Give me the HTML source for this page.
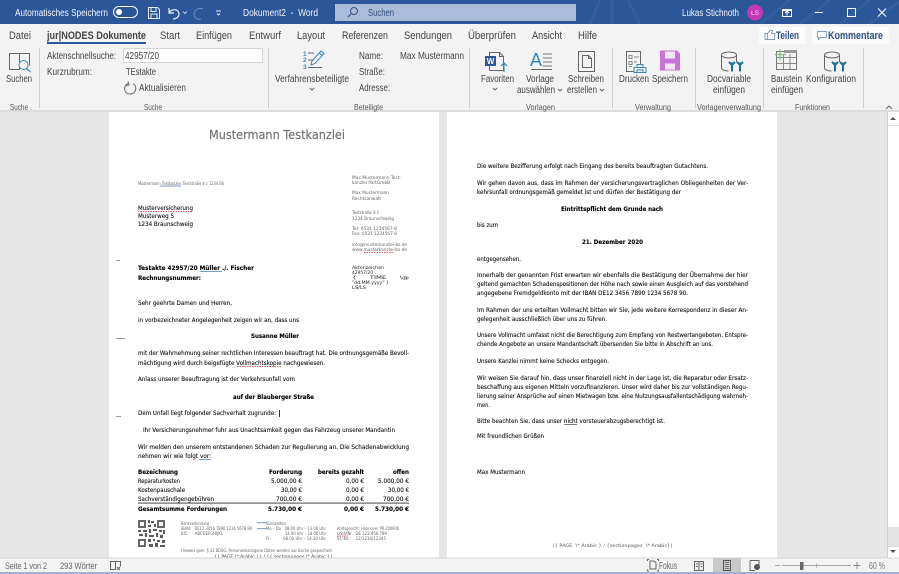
<!DOCTYPE html>
<html lang="de"><head><meta charset="utf-8"><title>Dokument2 - Word</title>
<style>
html,body{margin:0;padding:0;background:#e6e6e6;width:899px;height:574px;overflow:hidden}
svg{display:block;position:absolute;left:0;top:0;filter:blur(.35px)}
text{white-space:pre}
.u{font-family:"Liberation Sans",sans-serif;font-size:10px;fill:#444}
.g{font-family:"Liberation Sans",sans-serif;font-size:8.5px;fill:#555}
.t{font-family:"Liberation Sans",sans-serif;font-size:11px;fill:#444}
.w{font-family:"Liberation Sans",sans-serif;font-size:10px;fill:#f0f4fa}
.d{font-family:"DejaVu Sans",sans-serif;font-size:6.3px;fill:#111;stroke:#111;stroke-width:.12px}
.b{font-family:"DejaVu Sans",sans-serif;font-size:6.3px;font-weight:bold;fill:#000;stroke:#000;stroke-width:.1px}
.s{font-family:"DejaVu Sans",sans-serif;font-size:4.4px;fill:#666}
.i{fill:none;stroke:#666;stroke-width:1}
.sep{stroke:#cfcfcf;stroke-width:1}
</style></head><body>
<svg width="899" height="574" viewBox="0 0 899 574" xmlns="http://www.w3.org/2000/svg">
<!-- backgrounds -->
<rect width="899" height="574" fill="#e6e6e6"/>
<rect x="109" y="112" width="330" height="446" fill="#fff"/>
<rect x="447" y="112" width="330" height="446" fill="#fff"/>
<!-- title bar -->
<rect width="899" height="24" fill="#2b579a"/>
<g stroke="#3a66a8" stroke-width="3" fill="none" opacity=".55">
<path d="M590 24L600 0M612 24L612 0M640 24L628 0M760 24L790 0M800 24L830 0M840 24L870 0M870 24L899 2"/>
</g>
<text class="w" x="15" y="16" textLength="93" lengthAdjust="spacingAndGlyphs">Automatisches Speichern</text>
<rect x="113.500" y="6.500" width="24" height="11" rx="5.500" fill="none" stroke="#fff"/>
<circle cx="119" cy="12" r="3" fill="#fff"/>
<g fill="none" stroke="#e8eef7" stroke-width="1">
<path d="M148.500 7.500h9l2 2v9h-11zM151 7.500v4h5v-4M151 18.500v-4.500h6v4.500"/>
<path d="M169 8v5h5M169 13c3-5 10-4 10 1 0 3-3 5-6 5" stroke-width="1.200"/>
<path d="M183 11.500l2 2 2-2" stroke-width=".8"/>
<path d="M203 9c-4-2-9 1-9 5s4 6 7 5" opacity=".35"/>
<path d="M216 11h5M217 13.500l1.500 1.500 1.500-1.500" stroke-width=".9"/>
</g>
<text class="w" x="243" y="16" textLength="75" lengthAdjust="spacingAndGlyphs">Dokument2  -  Word</text>
<rect x="335" y="4" width="241" height="17" fill="#a9bcd9"/>
<g fill="none" stroke="#33527f" stroke-width="1"><circle cx="354" cy="11" r="3.500"/><path d="M351.500 13.500l-3.500 3.500"/></g>
<text class="u" x="368" y="16" textLength="26" lengthAdjust="spacingAndGlyphs" style="fill:#2f4d7a">Suchen</text>
<text class="w" x="682" y="16" textLength="57" lengthAdjust="spacingAndGlyphs">Lukas Stichnoth</text>
<circle cx="755" cy="12.500" r="8" fill="#c239b3"/>
<text x="755" y="15" text-anchor="middle" font-family="Liberation Sans,sans-serif" font-size="6.500" fill="#f6d8f2">LS</text>
<g fill="none" stroke="#fff" stroke-width="1">
<rect x="782.500" y="9.500" width="9" height="7"/><path d="M787 15.500v-4M785 13l2-2 2 2M782.500 10.500h9"/>
<path d="M815 12.500h8"/>
<rect x="847.500" y="8.500" width="8" height="8"/>
<path d="M878 8.500l8 8M886 8.500l-8 8"/>
</g>
<!-- ribbon -->
<rect y="24" width="899" height="87" fill="#f3f3f3"/>
<rect y="110" width="899" height="2" fill="#dcdcdc"/>
<text class="t" x="9" y="39" textLength="22" lengthAdjust="spacingAndGlyphs">Datei</text>
<text class="t" x="47" y="39" textLength="99" lengthAdjust="spacingAndGlyphs" style="font-weight:bold;fill:#444">jur|NODES Dokumente</text>
<text class="t" x="160" y="39" textLength="20" lengthAdjust="spacingAndGlyphs">Start</text>
<text class="t" x="196" y="39" textLength="36" lengthAdjust="spacingAndGlyphs">Einfügen</text>
<text class="t" x="249" y="39" textLength="32" lengthAdjust="spacingAndGlyphs">Entwurf</text>
<text class="t" x="297" y="39" textLength="28" lengthAdjust="spacingAndGlyphs">Layout</text>
<text class="t" x="342" y="39" textLength="46" lengthAdjust="spacingAndGlyphs">Referenzen</text>
<text class="t" x="404" y="39" textLength="48" lengthAdjust="spacingAndGlyphs">Sendungen</text>
<text class="t" x="468" y="39" textLength="48" lengthAdjust="spacingAndGlyphs">Überprüfen</text>
<text class="t" x="532" y="39" textLength="30" lengthAdjust="spacingAndGlyphs">Ansicht</text>
<text class="t" x="578" y="39" textLength="19" lengthAdjust="spacingAndGlyphs">Hilfe</text>
<rect x="47" y="42" width="99" height="2" fill="#2b579a"/>
<rect x="759" y="27" width="46" height="17" fill="#fbfbfb"/>
<rect x="812" y="27" width="77" height="17" fill="#fbfbfb"/>
<path d="M765 39.500v-6h2.500l3-3.500 2 .5-1 3h3.500l-.5 6zM767.500 33.500v6" fill="none" stroke="#5a7fb5" stroke-width=".7"/>
<text class="u" x="776" y="39" textLength="23" lengthAdjust="spacingAndGlyphs" style="font-weight:bold;fill:#2b4f88;font-size:11px">Teilen</text>
<path d="M817.500 31.500h9v6h-6l-2 2v-2h-1z" fill="none" stroke="#5a7fb5" stroke-width=".7"/>
<text class="u" x="828" y="39" textLength="55" lengthAdjust="spacingAndGlyphs" style="font-weight:bold;fill:#2b4f88;font-size:11px">Kommentare</text>
<!-- separators -->
<g class="sep">
<path d="M39.500 48v60M268.500 48v60M469.500 48v60M612.500 48v60M695.500 48v60M763.500 48v60M863.500 48v60"/>
</g>
<!-- Suche -->
<path class="i" d="M9.500 53.500h10v16h-10zM19.500 53.500h10v12"/>
<circle cx="23.500" cy="65" r="4.500" fill="#f3f3f3" stroke="#3d87b8" stroke-width="1"/>
<path d="M26.500 68.500l4 3.500" stroke="#3d87b8" stroke-width="1.200"/>
<text class="u" x="6" y="82" textLength="26" lengthAdjust="spacingAndGlyphs">Suchen</text>
<text class="g" x="10" y="110" textLength="18" lengthAdjust="spacingAndGlyphs">Suche</text>
<text class="u" x="47" y="59" textLength="69" lengthAdjust="spacingAndGlyphs">Aktenschnellsuche:</text>
<rect x="123.500" y="48.500" width="139" height="14" fill="#fff" stroke="#d4d4d4"/>
<text class="u" x="125" y="59" textLength="34" lengthAdjust="spacingAndGlyphs">42957/20</text>
<text class="u" x="47" y="75" textLength="45" lengthAdjust="spacingAndGlyphs">Kurzrubrum:</text>
<text class="u" x="126" y="75" textLength="30" lengthAdjust="spacingAndGlyphs">TEstakte</text>
<path class="i" d="M128 83.500c-5 2-4.500 10 1.500 10.500 7 .5 8-8 3.500-10.500M128 81.500l1 3.500-3 .5"/>
<text class="u" x="139" y="91" textLength="47" lengthAdjust="spacingAndGlyphs">Aktualisieren</text>
<text class="g" x="144" y="110" textLength="18" lengthAdjust="spacingAndGlyphs">Suche</text>
<!-- Beteiligte -->
<g font-family="Liberation Sans,sans-serif" font-size="6.500" fill="#3d87b8" font-weight="bold">
<text x="303" y="56">1</text><text x="303" y="62">2</text><text x="303" y="69">3</text></g>
<path d="M308 53h6M314 60h-6M308 67.500h14" stroke="#666" fill="none"/>
<path d="M311 65l1-4 9-10 3 2.500-9 10zM319.500 53l2.500 2.500" fill="none" stroke="#3d87b8" stroke-width="1"/>
<text class="u" x="275" y="82" textLength="74" lengthAdjust="spacingAndGlyphs">Verfahrensbeteiligte</text>
<path d="M310 88l2 2 2-2" class="i" stroke-width=".8"/>
<text class="u" x="359" y="59" textLength="24" lengthAdjust="spacingAndGlyphs">Name:</text>
<text class="u" x="400" y="59" textLength="64" lengthAdjust="spacingAndGlyphs">Max Mustermann</text>
<text class="u" x="359" y="75" textLength="26" lengthAdjust="spacingAndGlyphs">Straße:</text>
<text class="u" x="359" y="91" textLength="31" lengthAdjust="spacingAndGlyphs">Adresse:</text>
<text class="g" x="354" y="110" textLength="29" lengthAdjust="spacingAndGlyphs">Beteiligte</text>
<!-- Vorlagen -->
<path class="i" d="M489.500 52.500h10l4 4v14h-14z"/><path class="i" d="M499.500 52.500v4h4"/>
<rect x="485" y="56" width="11" height="10" fill="#2b579a"/>
<text x="490.500" y="64" text-anchor="middle" font-family="Liberation Sans,sans-serif" font-size="8" font-weight="bold" fill="#fff">W</text>
<path d="M504 72v-9M501 66l3-3 3 3" fill="none" stroke="#3d87b8" stroke-width="1.200"/>
<text class="u" x="481" y="82" textLength="33" lengthAdjust="spacingAndGlyphs">Favoriten</text>
<path d="M493 88l2 2 2-2" class="i" stroke-width=".8"/>
<text x="530" y="66" font-family="Liberation Sans,sans-serif" font-size="18" fill="#2e86c1">A</text>
<path d="M543 54h9M543 58h9M543 62h9M543 66h9" stroke="#777"/><path d="M531 69.500h21" stroke="#666"/>
<text class="u" x="526" y="82" textLength="28" lengthAdjust="spacingAndGlyphs">Vorlage</text>
<text class="u" x="517" y="93" textLength="38" lengthAdjust="spacingAndGlyphs">auswählen</text>
<path d="M558 89l2 2 2-2" class="i" stroke-width=".8"/>
<rect x="578.500" y="51.500" width="16" height="20" fill="none" stroke="#666"/>
<path class="i" d="M582.500 55.500h6l3 3v9h-9zM588.500 55.500v3h3"/>
<text class="u" x="568" y="82" textLength="36" lengthAdjust="spacingAndGlyphs">Schreiben</text>
<text class="u" x="567" y="93" textLength="30" lengthAdjust="spacingAndGlyphs">erstellen</text>
<path d="M600 89l2 2 2-2" class="i" stroke-width=".8"/>
<text class="g" x="526" y="110" textLength="29" lengthAdjust="spacingAndGlyphs">Vorlagen</text>
<!-- Verwaltung -->
<path class="i" d="M626.500 51.500h14v20h-14z"/>
<path d="M629 55.500h3v3h-3zM629 61.500h3v3h-3zM629 66.500h3M634 57h5M634 62h3" stroke="#888" fill="none"/>
<path d="M634 67.500h12v5h-12zM637 67.500v-3h6v3M637 72v-2h6v2" fill="#f3f3f3" stroke="#3d87b8"/>
<text class="u" x="619" y="82" textLength="30" lengthAdjust="spacingAndGlyphs">Drucken</text>
<path d="M660 50.500h17l3 3v17h-20z" fill="#c873d8"/>
<rect x="665" y="51.500" width="10" height="7" fill="#f3e6f6"/><rect x="665" y="63.500" width="10" height="6" fill="#f3e6f6"/>
<text class="u" x="652" y="82" textLength="36" lengthAdjust="spacingAndGlyphs">Speichern</text>
<text class="g" x="635" y="110" textLength="36" lengthAdjust="spacingAndGlyphs">Verwaltung</text>
<!-- db icons -->
<g><path class="i" d="M721.500 55v13c0 1.500 3 3 7 3M736.500 55v7"/><ellipse cx="729" cy="55" rx="7.500" ry="3" class="i"/>
<path d="M732 62.500v9M740 62.500v9M729 62l3 3 3-3M737 62l3 3 3-3" fill="none" stroke="#1f6e96" stroke-width="2"/></g>
<text class="u" x="707" y="82" textLength="44" lengthAdjust="spacingAndGlyphs">Docvariable</text>
<text class="u" x="713" y="93" textLength="32" lengthAdjust="spacingAndGlyphs">einfügen</text>
<text class="g" x="697" y="110" textLength="64" lengthAdjust="spacingAndGlyphs">Vorlagenverwaltung</text>
<g><rect x="776.500" y="51.500" width="20" height="18" fill="none" stroke="#777"/>
<rect x="784" y="50" width="13" height="3" fill="#999"/>
<path d="M776.500 57.500h20M776.500 63.500h20M783.500 54v15M790 54v15" stroke="#888" fill="none"/>
<path d="M780 49v11M775 54.500h11" stroke="#7cc07c" stroke-width="1.200"/></g>
<text class="u" x="771" y="82" textLength="31" lengthAdjust="spacingAndGlyphs">Baustein</text>
<text class="u" x="771" y="93" textLength="32" lengthAdjust="spacingAndGlyphs">einfügen</text>
<g transform="translate(103,0)"><path class="i" d="M721.500 55v13c0 1.500 3 3 7 3M736.500 55v7"/><ellipse cx="729" cy="55" rx="7.500" ry="3" class="i"/>
<path d="M732 62.500v9M740 62.500v9M729 62l3 3 3-3M737 62l3 3 3-3" fill="none" stroke="#1f6e96" stroke-width="2"/></g>
<text class="u" x="806" y="82" textLength="50" lengthAdjust="spacingAndGlyphs">Konfiguration</text>
<text class="g" x="795" y="110" textLength="35" lengthAdjust="spacingAndGlyphs">Funktionen</text>
<path d="M886 109l3-3 3 3" class="i"/>
<!-- page 1 -->
<text x="209" y="139" textLength="136" lengthAdjust="spacingAndGlyphs" font-family="DejaVu Sans,sans-serif" font-size="12.500" fill="#707070" stroke="#707070" stroke-width=".15">Mustermann Testkanzlei</text>
<text class="s" x="138" y="185" textLength="86" lengthAdjust="spacingAndGlyphs">Mustermann Testkanzlei Teststraße 8 c 1234 BS</text>
<rect x="160" y="185.500" width="21" height="1" fill="#7a9ac4"/>
<text class="s" x="352" y="179" textLength="49" lengthAdjust="spacingAndGlyphs">Max Mustermann Test-</text>
<text class="s" x="352" y="184" textLength="38" lengthAdjust="spacingAndGlyphs">kanzlei PartGmbB</text>
<text class="s" x="352" y="194" textLength="37" lengthAdjust="spacingAndGlyphs">Max Mustermann</text>
<text class="s" x="352" y="200" textLength="29" lengthAdjust="spacingAndGlyphs">Rechtsanwalt</text>
<text class="s" x="352" y="214" textLength="27" lengthAdjust="spacingAndGlyphs">Teststraße 8 c</text>
<text class="s" x="352" y="220" textLength="42" lengthAdjust="spacingAndGlyphs">1234 Braunschweig</text>
<text class="s" x="352" y="230" textLength="45" lengthAdjust="spacingAndGlyphs">Tel: 0531 1234567-8</text>
<text class="s" x="352" y="235" textLength="45" lengthAdjust="spacingAndGlyphs">Fax: 0531 1234567-8</text>
<text class="s" x="352" y="246" textLength="55" lengthAdjust="spacingAndGlyphs">info@musterkanzlei-bs.de</text>
<text class="s" x="352" y="251" textLength="55" lengthAdjust="spacingAndGlyphs">www.musterkanzlei-bs.de</text>
<path d="M364 252.500h30" stroke="#c33" stroke-width=".8" stroke-dasharray="1.500 1"/>
<text class="s" x="352" y="269" textLength="32" lengthAdjust="spacingAndGlyphs" style="fill:#222">Aktenzeichen</text>
<text class="s" x="352" y="274" textLength="21" lengthAdjust="spacingAndGlyphs" style="fill:#222">42957/20</text>
<text class="s" x="352" y="279" textLength="57" lengthAdjust="spacingAndGlyphs" style="fill:#222">{      TIME      \@</text>
<text class="s" x="352" y="284" textLength="37" lengthAdjust="spacingAndGlyphs" style="fill:#222">"dd.MM.yyyy" }</text>
<text class="s" x="352" y="289" textLength="14" lengthAdjust="spacingAndGlyphs" style="fill:#222">LS/LS</text>
<text class="d" x="138" y="210" textLength="55" lengthAdjust="spacingAndGlyphs">Musterversicherung</text>
<path d="M138 211.500h55" stroke="#c33" stroke-width=".8" stroke-dasharray="1.500 1"/>
<text class="d" x="138" y="218" textLength="36" lengthAdjust="spacingAndGlyphs">Musterweg 5</text>
<text class="d" x="138" y="226" textLength="55" lengthAdjust="spacingAndGlyphs">1234 Braunschweig</text>
<path d="M116 260.500h4M116 338.500h9M116 416.500h5" stroke="#999"/>
<text class="b" x="138" y="270" textLength="116" lengthAdjust="spacingAndGlyphs">Testakte 42957/20 Müller ./. Fischer</text>
<path d="M200 271.500h22" stroke="#7a9ac4"/>
<text class="b" x="138" y="280" textLength="63" lengthAdjust="spacingAndGlyphs">Rechnungsnummer:</text>
<text class="d" x="138" y="305" textLength="94" lengthAdjust="spacingAndGlyphs">Sehr geehrte Damen und Herren,</text>
<text class="d" x="138" y="322" textLength="161" lengthAdjust="spacingAndGlyphs">in vorbezeichneter Angelegenheit zeigen wir an, dass uns</text>
<text class="b" x="251" y="338" textLength="48" lengthAdjust="spacingAndGlyphs">Susanne Müller</text>
<text class="d" x="138" y="355" textLength="271" lengthAdjust="spacingAndGlyphs">mit der Wahrnehmung seiner rechtlichen Interessen beauftragt hat. Die ordnungsgemäße Bevoll-</text>
<text class="d" x="138" y="365" textLength="187" lengthAdjust="spacingAndGlyphs">mächtigung wird durch beigefügte Vollmachtskopie nachgewiesen.</text>
<path d="M237 366.500h45" stroke="#c33" stroke-width=".8" stroke-dasharray="1.500 1"/>
<text class="d" x="138" y="381" textLength="157" lengthAdjust="spacingAndGlyphs">Anlass unserer Beauftragung ist der Verkehrsunfall vom</text>
<text class="b" x="233" y="399" textLength="81" lengthAdjust="spacingAndGlyphs">auf der Blauberger Straße</text>
<text class="d" x="138" y="415" textLength="138" lengthAdjust="spacingAndGlyphs">Dem Unfall liegt folgender Sachverhalt zugrunde:</text>
<path d="M279.500 410v7" stroke="#333"/>
<text class="d" x="143" y="432" textLength="252" lengthAdjust="spacingAndGlyphs">Ihr Versicherungsnehmer fuhr aus Unachtsamkeit gegen das Fahrzeug unserer Mandantin</text>
<text class="d" x="138" y="449" textLength="271" lengthAdjust="spacingAndGlyphs">Wir melden den unserem entstandenen Schaden zur Regulierung an. Die Schadenabwicklung</text>
<text class="d" x="138" y="458" textLength="73" lengthAdjust="spacingAndGlyphs">nehmen wir wie folgt vor:</text>
<path d="M199 459.500h12" stroke="#7a9ac4"/>
<text class="b" x="138" y="474" textLength="40" lengthAdjust="spacingAndGlyphs">Bezeichnung</text>
<text class="b" x="269" y="474" textLength="33" lengthAdjust="spacingAndGlyphs">Forderung</text>
<text class="b" x="318" y="474" textLength="46" lengthAdjust="spacingAndGlyphs">bereits gezahlt</text>
<text class="b" x="393" y="474" textLength="16" lengthAdjust="spacingAndGlyphs">offen</text>
<text class="d" x="138" y="483" textLength="42" lengthAdjust="spacingAndGlyphs">Reparaturkosten</text>
<text class="d" x="271" y="483" textLength="31" lengthAdjust="spacingAndGlyphs">5.000,00 €</text><text class="d" x="346" y="483" textLength="18" lengthAdjust="spacingAndGlyphs">0,00 €</text><text class="d" x="378" y="483" textLength="31" lengthAdjust="spacingAndGlyphs">5.000,00 €</text>
<text class="d" x="138" y="492" textLength="47" lengthAdjust="spacingAndGlyphs">Kostenpauschale</text>
<text class="d" x="281" y="492" textLength="21" lengthAdjust="spacingAndGlyphs">30,00 €</text><text class="d" x="346" y="492" textLength="18" lengthAdjust="spacingAndGlyphs">0,00 €</text><text class="d" x="388" y="492" textLength="21" lengthAdjust="spacingAndGlyphs">30,00 €</text>
<text class="d" x="138" y="501" textLength="76" lengthAdjust="spacingAndGlyphs">Sachverständigengebühren</text>
<text class="d" x="276" y="501" textLength="26" lengthAdjust="spacingAndGlyphs">700,00 €</text><text class="d" x="346" y="501" textLength="18" lengthAdjust="spacingAndGlyphs">0,00 €</text><text class="d" x="383" y="501" textLength="26" lengthAdjust="spacingAndGlyphs">700,00 €</text>
<rect x="138" y="502.500" width="271" height="1.200" fill="#666"/>
<text class="b" x="138" y="511" textLength="89" lengthAdjust="spacingAndGlyphs">Gesamtsumme Forderungen</text>
<text class="b" x="268" y="511" textLength="34" lengthAdjust="spacingAndGlyphs">5.730,00 €</text><text class="b" x="344" y="511" textLength="20" lengthAdjust="spacingAndGlyphs">0,00 €</text><text class="b" x="375" y="511" textLength="34" lengthAdjust="spacingAndGlyphs">5.730,00 €</text>
<!-- QR -->
<g opacity=".8">
<path d="M138 520h8v8h-8zM157 520h8v8h-8zM138 539h8v8h-8z" fill="#444"/>
<path d="M140 522h4v4h-4zM159 522h4v4h-4zM140 541h4v4h-4z" fill="#fff"/>
<path d="M148 520h2v3h-2zM151 521h3v2h-3zM154 524h2v3h-2zM148 525h3v2h-3zM138 530h3v2h-3zM143 530h4v2h-4zM149 529h2v4h-2zM153 529h4v2h-4zM159 530h3v2h-3zM163 530h2v4h-2zM139 534h4v2h-4zM145 533h2v4h-2zM149 535h5v2h-5zM156 533h2v4h-2zM160 535h3v3h-3zM148 539h3v3h-3zM153 539h2v2h-2zM157 540h3v2h-3zM162 540h3v3h-3zM149 544h4v3h-4zM155 543h3v4h-3zM160 545h5v2h-5z" fill="#333"/>
</g>
<text class="s" x="181" y="525" textLength="28" lengthAdjust="spacingAndGlyphs">Bankverbindung</text>
<text class="s" x="181" y="530" textLength="71" lengthAdjust="spacingAndGlyphs">IBAN:   DE12 3456 7890 1234 5678 90</text>
<text class="s" x="181" y="535" textLength="42" lengthAdjust="spacingAndGlyphs">BIC:     ABCDEFGHIJKL</text>
<text class="s" x="266" y="525" textLength="20" lengthAdjust="spacingAndGlyphs">Bürozeiten</text>
<text class="s" x="266" y="530" textLength="60" lengthAdjust="spacingAndGlyphs">Mo – Do:  08.00 Uhr – 13.00 Uhr</text>
<text class="s" x="285" y="535" textLength="41" lengthAdjust="spacingAndGlyphs">14.00 Uhr – 18.00 Uhr</text>
<text class="s" x="266" y="540" textLength="60" lengthAdjust="spacingAndGlyphs">Fr:          08.00 Uhr – 14.30 Uhr</text>
<text class="s" x="337" y="530" textLength="62" lengthAdjust="spacingAndGlyphs">Amtsgericht: Hannover PR 200900</text>
<text class="s" x="337" y="535" textLength="50" lengthAdjust="spacingAndGlyphs">UStIdNr.: DE 123 456 789</text>
<text class="s" x="337" y="540" textLength="49" lengthAdjust="spacingAndGlyphs">St.-Nr.:    12/1234/12345</text>
<text class="s" x="181" y="552" textLength="152" lengthAdjust="spacingAndGlyphs">Hinweis gem. § 33 BDSG: Personenbezogene Daten werden zur Sache gespeichert.</text>
<rect x="257" y="522" width="9" height="1.200" fill="#8aa8d0"/><rect x="257" y="528" width="9" height="1.200" fill="#8aa8d0"/>
<path d="M337 536h11" stroke="#c33" stroke-width=".8" stroke-dasharray="1.500 1"/>
<text class="s" x="214" y="558" textLength="119" lengthAdjust="spacingAndGlyphs" style="fill:#444">{{ PAGE \* Arabic }} / {{ sectionpages \* Arabic }}</text>
<!-- page 2 -->
<text class="d" x="477" y="168" textLength="231" lengthAdjust="spacingAndGlyphs">Die weitere Bezifferung erfolgt nach Eingang des bereits beauftragten Gutachtens.</text>
<text class="d" x="477" y="185" textLength="271" lengthAdjust="spacingAndGlyphs">Wir gehen davon aus, dass im Rahmen der versicherungsvertraglichen Obliegenheiten der Ver-</text>
<text class="d" x="477" y="194" textLength="204" lengthAdjust="spacingAndGlyphs">kehrsunfall ordnungsgemäß gemeldet ist und dürfen der Bestätigung der</text>
<text class="b" x="561" y="211" textLength="102" lengthAdjust="spacingAndGlyphs">Eintrittspflicht dem Grunde nach</text>
<text class="d" x="477" y="227" textLength="21" lengthAdjust="spacingAndGlyphs">bis zum</text>
<text class="b" x="582" y="244" textLength="61" lengthAdjust="spacingAndGlyphs">21. Dezember 2020</text>
<text class="d" x="477" y="261" textLength="44" lengthAdjust="spacingAndGlyphs">entgegensehen.</text>
<text class="d" x="477" y="277" textLength="271" lengthAdjust="spacingAndGlyphs">Innerhalb der genannten Frist erwarten wir ebenfalls die Bestätigung der Übernahme der hier</text>
<text class="d" x="477" y="286" textLength="271" lengthAdjust="spacingAndGlyphs">geltend gemachten Schadenspositionen der Höhe nach sowie einen Ausgleich auf das vorstehend</text>
<text class="d" x="477" y="295" textLength="211" lengthAdjust="spacingAndGlyphs">angegebene Fremdgeldkonto mit der IBAN DE12 3456 7890 1234 5678 90.</text>
<text class="d" x="477" y="312" textLength="271" lengthAdjust="spacingAndGlyphs">Im Rahmen der uns erteilten Vollmacht bitten wir Sie, jede weitere Korrespondenz in dieser An-</text>
<text class="d" x="477" y="321" textLength="130" lengthAdjust="spacingAndGlyphs">gelegenheit ausschließlich über uns zu führen.</text>
<text class="d" x="477" y="337" textLength="271" lengthAdjust="spacingAndGlyphs">Unsere Vollmacht umfasst nicht die Berechtigung zum Empfang von Restwertangeboten. Entspre-</text>
<text class="d" x="477" y="346" textLength="236" lengthAdjust="spacingAndGlyphs">chende Angebote an unsere Mandantschaft übersenden Sie bitte in Abschrift an uns.</text>
<text class="d" x="477" y="363" textLength="132" lengthAdjust="spacingAndGlyphs">Unsere Kanzlei nimmt keine Schecks entgegen.</text>
<text class="d" x="477" y="380" textLength="271" lengthAdjust="spacingAndGlyphs">Wir weisen Sie darauf hin, dass unser finanziell nicht in der Lage ist, die Reparatur oder Ersatz-</text>
<text class="d" x="477" y="389" textLength="271" lengthAdjust="spacingAndGlyphs">beschaffung aus eigenen Mitteln vorzufinanzieren. Unser wird daher bis zur vollständigen Regu-</text>
<text class="d" x="477" y="398" textLength="271" lengthAdjust="spacingAndGlyphs">lierung seiner Ansprüche auf einen Mietwagen bzw. eine Nutzungsausfallentschädigung wahrneh-</text>
<text class="d" x="477" y="407" textLength="13" lengthAdjust="spacingAndGlyphs">men.</text>
<text class="d" x="477" y="423" textLength="188" lengthAdjust="spacingAndGlyphs">Bitte beachten Sie, dass unser nicht vorsteuerabzugsberechtigt ist.</text>
<path d="M564 424.500h13" stroke="#444" stroke-width=".7"/>
<text class="d" x="477" y="438" textLength="67" lengthAdjust="spacingAndGlyphs">Mit freundlichen Grüßen</text>
<text class="d" x="477" y="474" textLength="48" lengthAdjust="spacingAndGlyphs">Max Mustermann</text>
<text class="s" x="553" y="547" textLength="119" lengthAdjust="spacingAndGlyphs" style="fill:#555">|{ PAGE  \* Arabic } / {sectionpages  \* Arabic}|</text>
<!-- scrollbar -->
<rect x="887" y="112" width="12" height="446" fill="#fff"/>
<path d="M887.500 112v446" stroke="#cfcfcf"/>
<rect x="888" y="527" width="11" height="19" fill="#e3e3e3"/>
<path d="M890 120l3-3 3 3z" fill="#555"/><path d="M890 550l3 3 3-3z" fill="#555"/>
<path d="M888 125.500h11M888 546.500h11" stroke="#dcdcdc"/>
<!-- status bar -->
<rect y="558" width="899" height="14" fill="#f3f3f3"/>
<path d="M0 558h899" stroke="#d6d6d6"/>
<rect y="572" width="899" height="2" fill="#9fb4cf"/>
<text class="u" x="5" y="569" textLength="42" lengthAdjust="spacingAndGlyphs" style="font-size:9.500px;fill:#666">Seite 1 von 2</text>
<text class="u" x="60" y="569" textLength="37" lengthAdjust="spacingAndGlyphs" style="font-size:9.500px;fill:#666">293 Wörter</text>
<path class="i" d="M110.500 561.500h5v8h-5zM115.500 561.500h5v5M117 567l3 3M120 567l-3 3"/>
<path class="i" d="M650 561h4l2 2v6h-6zM647.500 561v-1.500h1.500M647.500 569.500v1.500h1.500M657 559.500h1.500v1.500M657 571h1.500v-1.500" stroke-width=".8"/>
<text class="u" x="659" y="569" textLength="18" lengthAdjust="spacingAndGlyphs" style="fill:#666">Fokus</text>
<rect x="694.500" y="561.500" width="9" height="9" class="i"/><path d="M699 561.500v9M696 564h2M696 566.500h2M700.500 564h2M700.500 566.500h2" class="i" stroke-width=".7"/>
<rect x="713" y="558" width="28" height="14" fill="#c8c8c8"/>
<rect x="723.500" y="560.500" width="7" height="10" fill="none" stroke="#555"/><path d="M725 562.500h4M725 564.500h4M725 566.500h4M725 568.500h4" stroke="#555" stroke-width=".8"/>
<path class="i" d="M750 560.500h9v5M750 560.500v10h5"/><circle cx="757" cy="567" r="3" fill="#555"/>
<path d="M775 565.500h5M782 565.500h69" stroke="#aaa"/><path d="M853.500 565.500h7M857 562v7" stroke="#888"/>
<path d="M816.500 563.500v4" stroke="#aaa"/>
<rect x="800" y="562" width="3.500" height="8" fill="#666"/>
<text class="u" x="869" y="569" textLength="16" lengthAdjust="spacingAndGlyphs" style="fill:#777">60 %</text>
</svg>
</body></html>
